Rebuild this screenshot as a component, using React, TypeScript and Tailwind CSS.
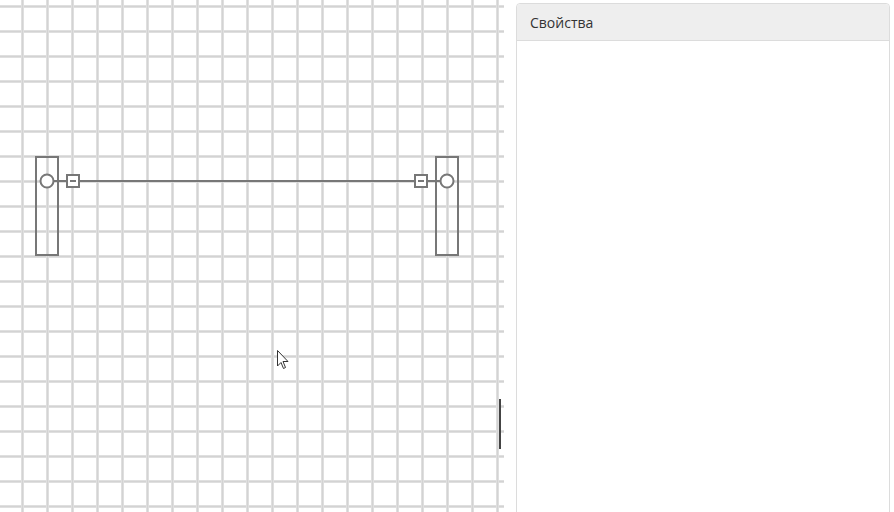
import React from "react";

export default function App() {
  return (
    <div className="flex h-[512px] w-[894px] overflow-hidden bg-white" style={{ fontFamily: '"Open Sans", "Noto Sans", sans-serif' }}>
      <div className="relative h-[512px] w-[504px] shrink-0 bg-white bg-[linear-gradient(to_right,transparent_21px,#dfdfdf_21px,#dfdfdf_22px,#d3d3d3_22px,#d3d3d3_23px,#dfdfdf_23px,#dfdfdf_24px,transparent_24px),linear-gradient(to_bottom,transparent_5px,#dfdfdf_5px,#dfdfdf_6px,#d3d3d3_6px,#d3d3d3_7px,#dfdfdf_7px,#dfdfdf_8px,transparent_8px)] bg-[length:25px_25px]">
        <svg className="absolute left-0 top-0" width="504" height="512" viewBox="0 0 504 512">
          <g fill="white" stroke="#777" strokeWidth="2">
            <rect x="36" y="157" width="22" height="98" fill="none" />
            <rect x="436" y="157" width="22" height="98" fill="none" />
            <line x1="53" y1="181" x2="67" y2="181" />
            <line x1="79" y1="181" x2="415" y2="181" />
            <line x1="427" y1="181" x2="441" y2="181" />
            <circle cx="47" cy="181" r="6.5" />
            <circle cx="447" cy="181" r="6.5" />
            <rect x="67" y="175" width="12" height="12" />
            <rect x="415" y="175" width="12" height="12" />
            <line x1="70" y1="181" x2="76" y2="181" />
            <line x1="418" y1="181" x2="424" y2="181" />
          </g>
          <path d="M277.5 350.5 L277.5 366 L281 362.5 L283.5 368.5 L285.5 367.5 L283 361.5 L288 361.5 Z" fill="white" stroke="#333" strokeWidth="1" strokeLinejoin="round" />
          <rect x="499" y="399" width="2" height="50" fill="#444" />
        </svg>
      </div>
      <div className="ml-[12px] mt-[3px] flex h-[520px] w-[374px] flex-col rounded-t-[4px] border border-[#dcdcdc] bg-white">
        <div className="flex h-[37px] items-center rounded-t-[4px] border-b border-[#dcdcdc] bg-[#eeeeee] px-[13px] text-[14px] text-[#333]">
          Свойства
        </div>
      </div>
    </div>
  );
}
